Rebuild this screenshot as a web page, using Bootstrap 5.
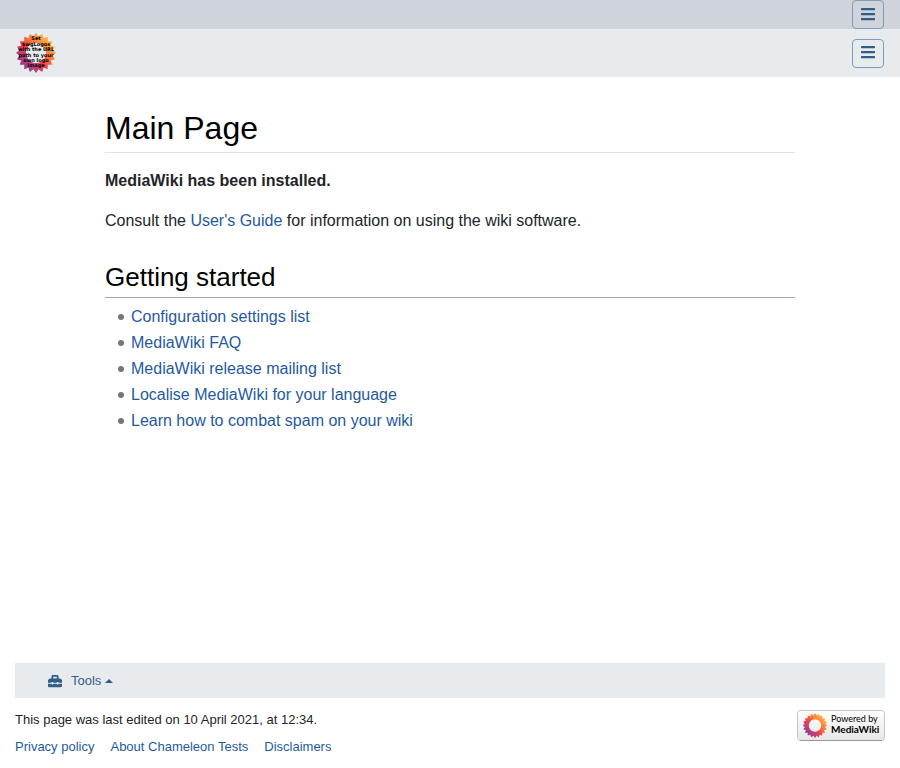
<!DOCTYPE html>
<html lang="en">
<head>
<meta charset="utf-8">
<meta name="viewport" content="width=device-width, initial-scale=1">
<title>Main Page</title>
<link href="https://cdn.jsdelivr.net/npm/bootstrap@5.3.0/dist/css/bootstrap.min.css" rel="stylesheet">
<style>
body { font-family: "Liberation Sans", Arial, sans-serif; font-size: 16px; line-height: 24px; color: #212529; }
a { color: #1f5a9e; text-decoration: none; }
a:hover { text-decoration: underline; }
.bar-top { background: #ced4da; }
.bar-main { background: #e8ebee; min-height: 48px; }
.menu-toggle { width: 32px; height: 29px; padding: 0 0 1px; border: 1px solid #829bb8; border-radius: 4px; color: #325d88; background: transparent; line-height: 1; }
.bar-main .menu-toggle { padding-bottom: 3px; }
.menu-toggle svg, .tools-link svg { fill: currentColor; display: block; }
.wiki-content { max-width: 720px; padding: 32px 15px; }
.page-title { font-size: 32px; line-height: 38px; color: #000; padding-bottom: 5px; border-bottom: 1px solid #dee2e6; margin-bottom: 16px; font-weight: 400; }
.section-title { font-size: 26px; line-height: 30px; color: #000; padding-bottom: 5px; border-bottom: 1px solid #a2a9b1; margin: 29px 0 7px; font-weight: 400; }
.wiki-list { padding-left: 26px; line-height: 24px; }
.wiki-list li + li { margin-top: 2px; }
.wiki-list li { position: relative; list-style: none; }
.wiki-list li::before { content: ""; position: absolute; left: -13px; top: 9px; width: 6px; height: 6px; border-radius: 50%; background: #72777d; }
.page-foot { padding: 0 15px 11px; font-size: 13px; line-height: 20px; }
.tools-bar { background: #e8ebee; padding: 0 33px; min-height: 35px; }
.tools-link { color: #325d88; gap: 9px; }
.foot-links { gap: 16px; margin-top: 7px; }
</style>
</head>
<body class="d-flex flex-column min-vh-100">
<svg width="0" height="0" class="position-absolute" aria-hidden="true">
  <defs>
    <linearGradient id="sun" x1="0.12" y1="0.88" x2="0.88" y2="0.12">
      <stop offset="0" stop-color="#7b3a96"/><stop offset="0.22" stop-color="#b8407c"/><stop offset="0.42" stop-color="#ee3f4e"/><stop offset="0.65" stop-color="#fb7a3e"/><stop offset="1" stop-color="#ffc13c"/>
    </linearGradient>
    <path id="p1" d="M-2.800 -10L-2.800 -16Q-2 -17.500 0 -20Q2 -17.500 2.800 -16L2.800 -10z"/>
    <g id="p5"><use href="#p1"/><use href="#p1" transform="rotate(18)"/><use href="#p1" transform="rotate(36)"/><use href="#p1" transform="rotate(54)"/><use href="#p1" transform="rotate(72)"/></g>
    <mask id="petals" maskUnits="userSpaceOnUse" x="-20" y="-20" width="40" height="40">
      <g fill="#fff"><use href="#p5"/><use href="#p5" transform="rotate(90)"/><use href="#p5" transform="rotate(180)"/><use href="#p5" transform="rotate(270)"/></g>
    </mask>
    <g id="flower"><rect x="-20" y="-20" width="40" height="40" fill="url(#sun)" mask="url(#petals)"/></g>
    <linearGradient id="plate" x1="0" y1="0" x2="0" y2="1"><stop offset="0" stop-color="#fff"/><stop offset="1" stop-color="#e6e6e6"/></linearGradient>
    <path id="bars" d="M16 132h416c8.800 0 16-7.200 16-16V76c0-8.800-7.200-16-16-16H16C7.200 60 0 67.200 0 76v40c0 8.800 7.200 16 16 16zm0 160h416c8.800 0 16-7.200 16-16v-40c0-8.800-7.200-16-16-16H16c-8.800 0-16 7.200-16 16v40c0 8.800 7.200 16 16 16zm0 160h416c8.800 0 16-7.200 16-16v-40c0-8.800-7.200-16-16-16H16c-8.800 0-16 7.200-16 16v40c0 8.800 7.200 16 16 16z"/>
  </defs>
</svg>

<nav class="bar-top d-flex justify-content-end px-3" aria-label="Personal">
  <button class="menu-toggle d-flex align-items-center justify-content-center" type="button" aria-label="Toggle personal menu"><svg width="14" height="16" viewBox="0 0 448 512"><use href="#bars"/></svg></button>
</nav>
<nav class="bar-main d-flex align-items-center justify-content-between px-3" aria-label="Main">
  <a href="#" aria-label="Main Page">
    <svg class="d-block" width="40" height="40" viewBox="-20 -20 40 40">
      <use href="#flower"/>
      <g font-family="DejaVu Sans, sans-serif" font-weight="700" font-size="5" text-anchor="middle" fill="#000">
        <text y="-13">Set</text><text y="-7">$wgLogos</text><text y="-2">with the URL</text><text y="4">path to your</text><text y="9">own logo</text><text y="14">image</text>
      </g>
    </svg>
  </a>
  <button class="menu-toggle d-flex align-items-center justify-content-center" type="button" aria-label="Toggle main menu"><svg width="14" height="16" viewBox="0 0 448 512"><use href="#bars"/></svg></button>
</nav>

<main class="wiki-content container flex-grow-1">
  <h1 class="page-title">Main Page</h1>
  <p><strong>MediaWiki has been installed.</strong></p>
  <p>Consult the <a href="#">User's Guide</a> for information on using the wiki software.</p>
  <h2 class="section-title">Getting started</h2>
  <ul class="wiki-list">
    <li><a href="#">Configuration settings list</a></li>
    <li><a href="#">MediaWiki FAQ</a></li>
    <li><a href="#">MediaWiki release mailing list</a></li>
    <li><a href="#">Localise MediaWiki for your language</a></li>
    <li><a href="#">Learn how to combat spam on your wiki</a></li>
  </ul>
</main>

<footer class="page-foot">
  <div class="tools-bar d-flex align-items-center">
    <a class="tools-link d-flex align-items-center" href="#">
      <svg width="14" height="14" viewBox="0 0 512 512" aria-hidden="true"><path d="M502.630 214.630l-45.250-45.250c-6-6-14.140-9.370-22.630-9.370H384V80c0-26.510-21.490-48-48-48H176c-26.510 0-48 21.490-48 48v80H77.250c-8.490 0-16.620 3.370-22.630 9.370L9.370 214.630c-6 6-9.370 14.140-9.370 22.630V320h128v-16c0-8.840 7.160-16 16-16h32c8.840 0 16 7.160 16 16v16h128v-16c0-8.840 7.160-16 16-16h32c8.840 0 16 7.160 16 16v16h128v-82.750c0-8.480-3.370-16.620-9.370-22.620zM320 160H192V96h128v64zm64 208c0 8.840-7.160 16-16 16h-32c-8.840 0-16-7.160-16-16v-16H192v16c0 8.840-7.160 16-16 16h-32c-8.840 0-16-7.160-16-16v-16H0v96c0 17.670 14.330 32 32 32h448c17.670 0 32-14.330 32-32v-96H384v16z"/></svg>
      <span class="d-flex align-items-center gap-1">Tools <svg width="8" height="4" viewBox="0 0 8 4" aria-hidden="true"><path d="M0 4L4 0L8 4z"/></svg></span>
    </a>
  </div>
  <div class="d-flex justify-content-between align-items-start pt-2 mt-1">
    <div>
      <div>This page was last edited on 10 April 2021, at 12:34.</div>
      <div class="foot-links d-flex flex-wrap"><a href="#">Privacy policy</a><a href="#">About Chameleon Tests</a><a href="#">Disclaimers</a></div>
    </div>
    <a href="#" aria-label="Powered by MediaWiki">
      <svg class="d-block" width="88" height="31" viewBox="0 0 88 31">
        <rect x="0.500" y="0.500" width="87" height="30" rx="3" fill="url(#plate)" stroke="#c4c4c4"/>
        <path d="M3 30.500H85" stroke="#999"/>
        <use href="#flower" transform="translate(18 15.500) scale(.62)"/>
        <g font-family="Lato, sans-serif" fill="#000"><text x="34" y="12" font-size="9">Powered by</text><text x="34" y="23" font-size="10" font-weight="700">MediaWiki</text></g>
      </svg>
    </a>
  </div>
</footer>
<script src="https://cdn.jsdelivr.net/npm/bootstrap@5.3.0/dist/js/bootstrap.bundle.min.js"></script>
</body>
</html>
